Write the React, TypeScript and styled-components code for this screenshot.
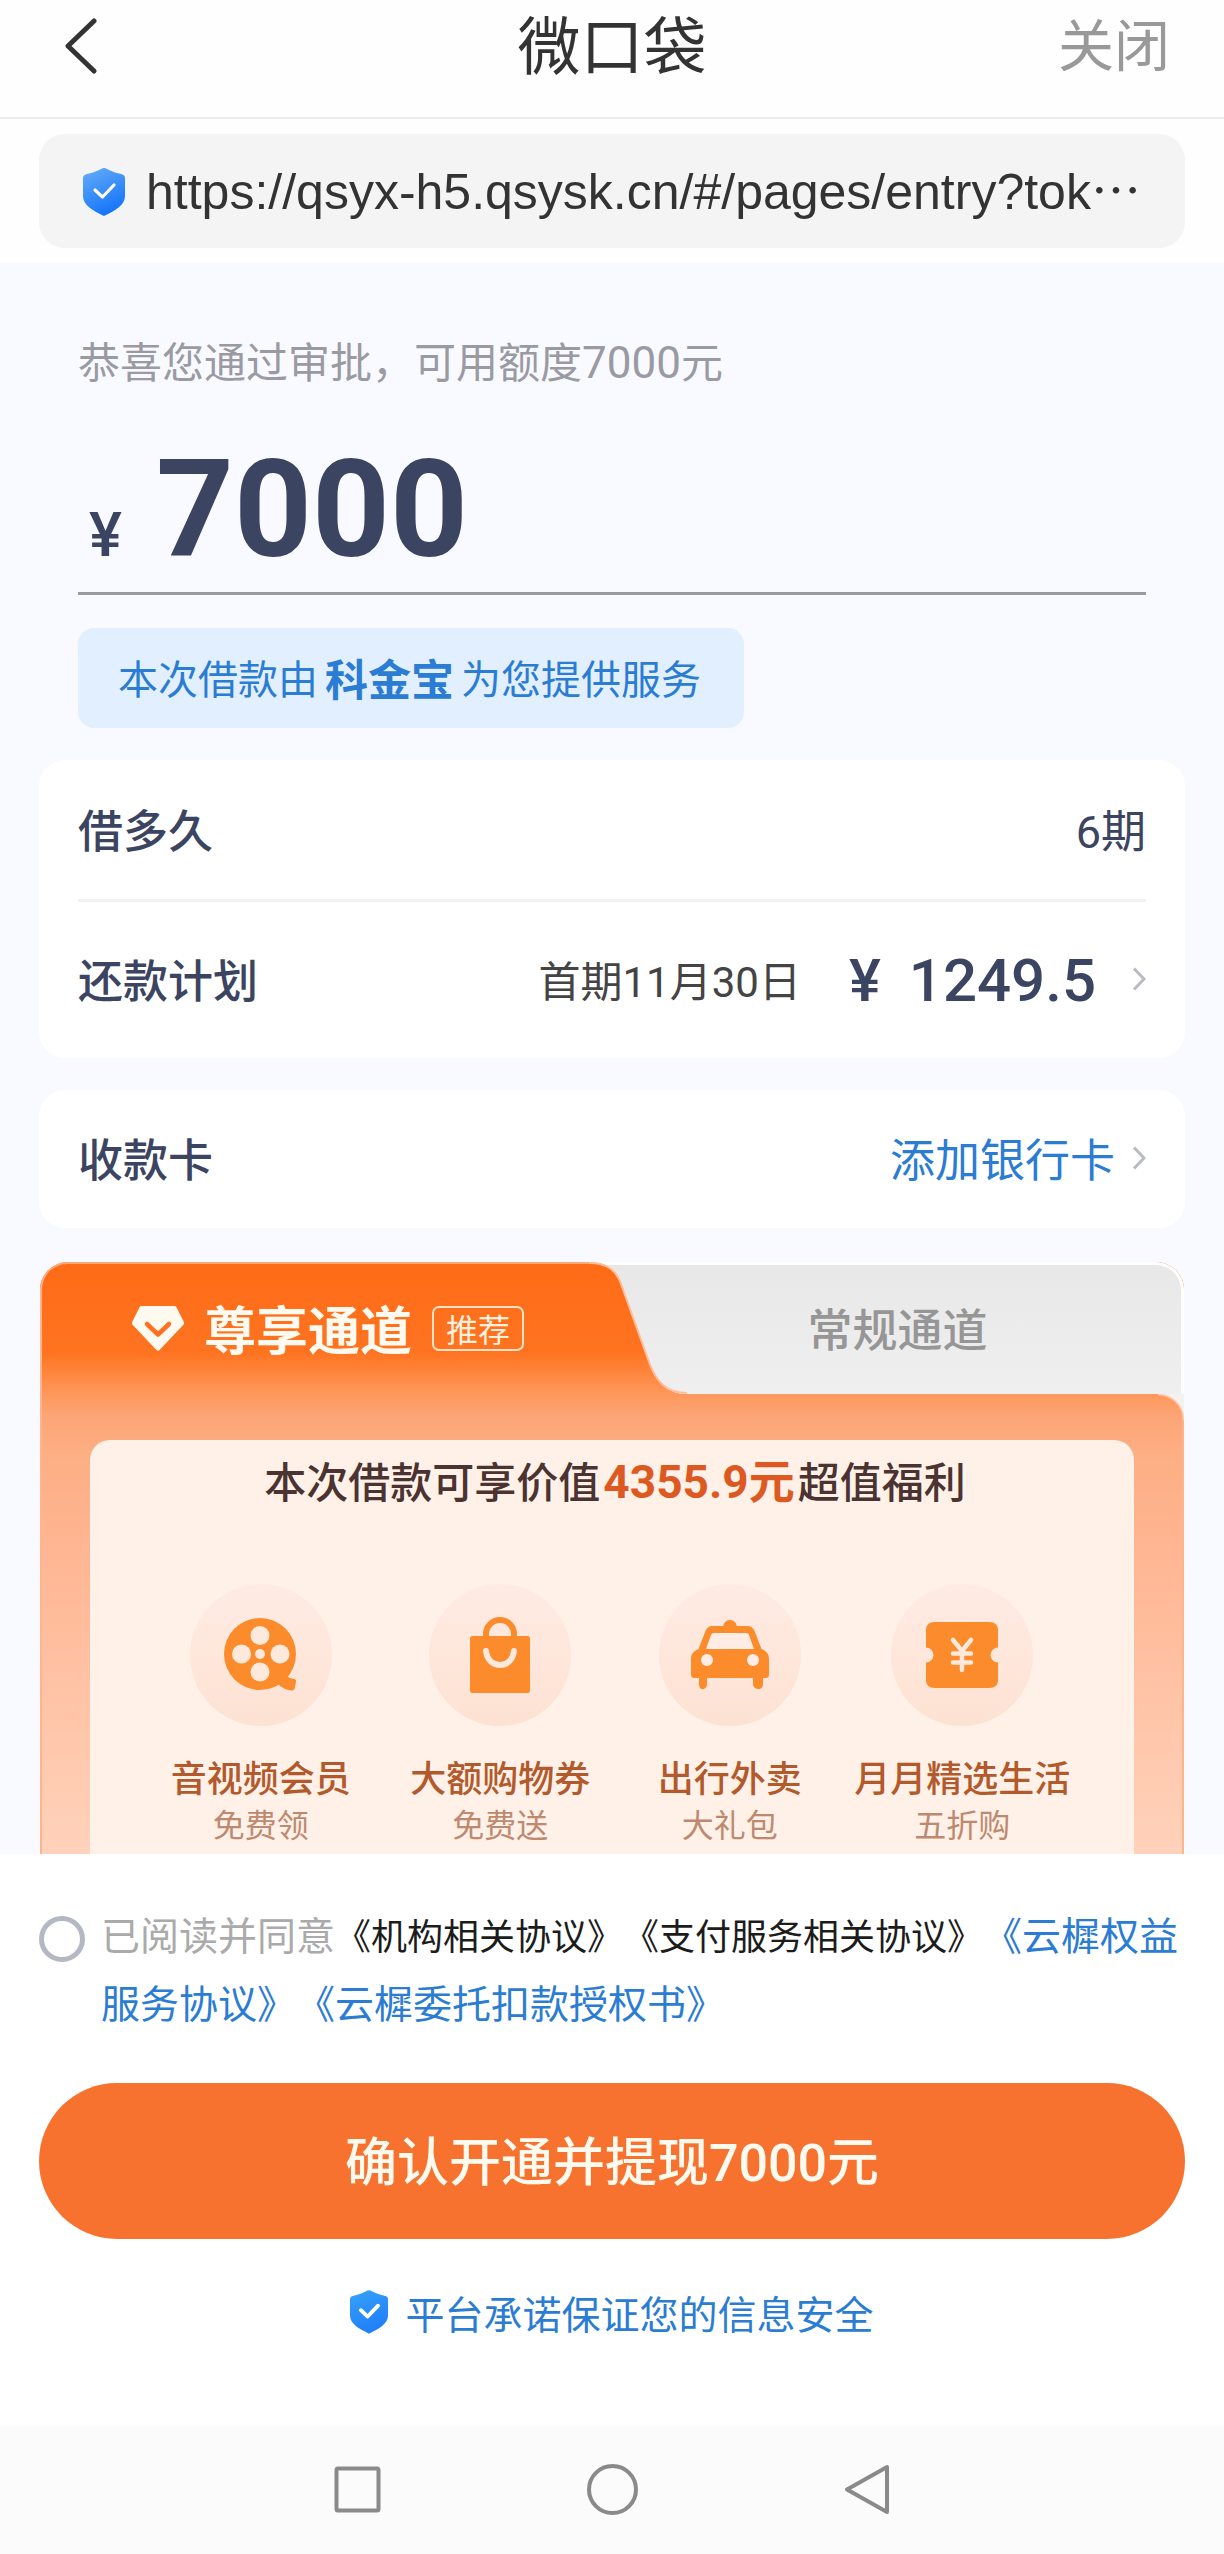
import React, { useState } from 'react';
import styled, { createGlobalStyle } from 'styled-components';

const C = {
  ink: '#3b4460',
  muted: '#9a9aa3',
  link: '#2b7cd3',
  page: '#f9faff',
  orange: '#f8722f',
  icon: '#fb8b2b',
};

const GlobalStyle = createGlobalStyle`
  *, *::before, *::after { box-sizing: border-box; }
  body {
    margin: 0;
    background: #fefefe;
    font-family: "Noto Sans CJK SC", sans-serif;
    text-spacing-trim: space-all;
    color: ${C.ink};
  }
  button { font: inherit; color: inherit; background: none; border: 0; padding: 0; cursor: pointer; }
  a { text-decoration: none; }
  svg { display: block; flex: none; }
`;

const Screen = styled.div`
  display: flex;
  flex-direction: column;
  min-height: 100vh;
`;

const Num = styled.span<{ $size?: number }>`
  font-family: Roboto, sans-serif;
  line-height: 1;
  ${(p) => (p.$size ? `font-size: ${p.$size}px;` : '')}
`;

const TopBar = styled.header`
  display: grid;
  grid-template-columns: 1fr auto 1fr;
  align-items: center;
  padding: 0 54px 33px;
  border-bottom: 2px solid #ececec;
`;

const BackButton = styled.button`
  justify-self: start;
  margin: 8px 0 0 10px;
`;

const AppTitle = styled.h1`
  margin: 0;
  font-size: 63px;
  line-height: 84px;
  font-weight: 400;
  color: #333;
`;

const CloseButton = styled.button`
  justify-self: end;
  && {
    font-size: 56px;
    line-height: 84px;
    color: #999;
  }
`;

const AddressWrap = styled.div`
  padding: 15px 39px;
`;

const Address = styled.div`
  display: flex;
  align-items: center;
  gap: 21px;
  padding: 26px 44px 24px;
  border-radius: 26px;
  background: #f4f4f4;
`;

const AddressText = styled.span`
  font-family: "Liberation Sans", sans-serif;
  font-size: 50px;
  line-height: 64px;
  white-space: nowrap;
  color: #333;
`;

const Dots = styled.span`
  font-family: "Noto Sans CJK SC", sans-serif;
  line-height: 1;
`;

const Main = styled.main`
  display: flex;
  flex-direction: column;
  gap: 32px;
  padding: 67px 39px 0;
  background: ${C.page};
`;

const Quota = styled.section`
  display: flex;
  flex-direction: column;
  padding: 0 39px;
`;

const Congrats = styled.p`
  margin: 0;
  font-size: 42px;
  line-height: 60px;
  color: ${C.muted};
`;

const Amount = styled.div`
  display: flex;
  align-items: baseline;
  gap: 34px;
  padding: 40px 0 2px 11px;
  border-bottom: 3px solid ${C.muted};
  font-family: Roboto, sans-serif;
`;

const Currency = styled.span`
  font-size: 62px;
  font-weight: 500;
`;

const AmountValue = styled.strong`
  font-size: 136px;
  line-height: 160px;
  font-weight: 700;
`;

const Provider = styled.div`
  display: flex;
  align-self: flex-start;
  align-items: center;
  gap: 7px;
  margin-top: 33px;
  padding: 19px 43px 21px 40px;
  border-radius: 16px;
  background: #e2efff;
  font-size: 40px;
  line-height: 60px;
  color: ${C.link};
`;

const ProviderName = styled.strong`
  font-size: 43px;
  font-weight: 700;
`;

const Card = styled.section`
  padding: 0 39px;
  border-radius: 26px;
  background: #fff;
`;

const Row = styled.div<{ $pad: string; $divided?: boolean }>`
  display: flex;
  align-items: center;
  padding: ${(p) => p.$pad};
  border-bottom: ${(p) => (p.$divided ? '3px solid #f2f2f4' : '0')};
  font-size: 45px;
  line-height: 64px;
`;

const RowLabel = styled.span`
  flex: 1;
  font-weight: 500;
`;

const RowAction = styled.button<{ $gap: number; $link?: boolean }>`
  display: flex;
  align-items: center;
  gap: ${(p) => p.$gap}px;
  && { color: ${(p) => (p.$link ? C.link : C.ink)}; }
`;

const FirstDue = styled.span`
  margin-right: 12px;
  font-size: 42px;
  color: #444;
`;

const Installment = styled.span`
  display: flex;
  gap: 28px;
  padding-top: 4px;
  font-family: Roboto, sans-serif;
  font-size: 60px;
  font-weight: 500;
`;

const Promo = styled.section`
  position: relative;
  margin: 2px 1px 0;
  border-radius: 28px 28px 0 0;
  background: linear-gradient(
    180deg,
    #ff6b17 0,
    #ff7320 90px,
    #fe9659 130px,
    #fca577 154px,
    #fdae83 190px,
    #ffb591 280px,
    #ffd2bb 592px
  );
  box-shadow: inset 0 2px 0 #ffa877, inset 2px 0 0 #ffb48c, inset -2px 0 0 #ffb48c;
`;

const Tabs = styled.div`
  display: flex;
`;

const ActiveTab = styled.button`
  flex: 0 0 48%;
  display: flex;
  align-items: center;
  gap: 20px;
  && { padding-left: 92px; }
`;

const ActiveTabText = styled.span`
  font-size: 52px;
  line-height: 132px;
  font-weight: 700;
  color: #fffaf0;
`;

const Tag = styled.span`
  padding: 0 12px;
  border: 2px solid #ffe2c4;
  border-radius: 7px;
  font-size: 32px;
  line-height: 41px;
  font-weight: 400;
  color: #fff1dd;
`;

const IdleTab = styled.button`
  position: relative;
  flex: 1;
  && {
    padding-left: 22px;
    font-size: 45px;
    line-height: 132px;
    font-weight: 500;
    color: #969696;
  }
  &::before {
    content: '';
    position: absolute;
    inset: 0 0 0 97px;
    border: solid #fff;
    border-width: 3px 3px 0 0;
    border-radius: 0 28px 0 0;
    background: linear-gradient(#e8e8e8, #efefef);
  }
  &::after {
    content: '';
    position: absolute;
    top: 100%;
    right: 0;
    width: 26px;
    height: 26px;
    background: radial-gradient(circle at 0 100%, transparent 24px, #ffbd98 25px, #f4f2f1 27px);
  }
`;

const Slant = styled.svg`
  position: absolute;
  left: 0;
  top: 0;
`;

const IdleTabText = styled.span`
  position: relative;
`;

const Benefits = styled.div`
  margin: 46px 50px 0;
  padding: 10px 47px 8px 53px;
  border-radius: 20px 20px 0 0;
  background: #fff0e8;
`;

const BenefitsTitle = styled.h2`
  margin: 0;
  font-size: 42px;
  line-height: 60px;
  font-weight: 500;
  text-align: center;
  white-space: nowrap;
  color: #4a3330;
`;

const Worth = styled.strong`
  padding: 0 3px;
  font-size: 46px;
  line-height: 1;
  font-weight: 700;
  color: #dc5a22;
`;

const BenefitList = styled.ul`
  display: grid;
  grid-template-columns: 236fr 244fr 216fr 250fr;
  margin: 74px 0 0;
  padding: 0;
  list-style: none;
`;

const Benefit = styled.li`
  display: flex;
  flex-direction: column;
  align-items: center;
  white-space: nowrap;
`;

const Disc = styled.span`
  display: grid;
  place-items: center;
  width: 142px;
  height: 142px;
  margin-bottom: 26px;
  border-radius: 50%;
  background: linear-gradient(#ffebe4, #fde2d2);
`;

const BenefitName = styled.span`
  font-size: 36px;
  line-height: 48px;
  font-weight: 500;
  color: #b25a2c;
`;

const BenefitNote = styled.span`
  font-size: 32px;
  line-height: 46px;
  font-weight: 400;
  color: #bd8a70;
`;

const Footer = styled.footer`
  display: flex;
  flex-direction: column;
  padding: 46px 39px 85px;
  background: #fff;
`;

const Agreement = styled.div`
  display: flex;
  gap: 16px;
`;

const AgreeRadio = styled.input`
  appearance: none;
  flex: none;
  width: 46px;
  height: 46px;
  margin: 16px 0 0;
  border: 5px solid #b3b8c2;
  border-radius: 50%;
  &:checked { background: ${C.orange}; }
`;

const AgreementText = styled.p`
  margin: 0;
  font-size: 39px;
  line-height: 67px;
`;

const AgreeLabel = styled.label`
  color: #aaa;
`;

const PlainDoc = styled.a`
  font-size: 36px;
  color: #1c1c1c;
`;

const LinkDoc = styled.a`
  color: ${C.link};
`;

const Confirm = styled.button`
  && {
    margin-top: 48px;
    padding: 38px 0 42px;
    border-radius: 78px;
    background: ${C.orange};
    font-size: 52px;
    line-height: 76px;
    font-weight: 500;
    color: #fffaf0;
  }
`;

const Promise = styled.p`
  display: flex;
  align-items: center;
  justify-content: center;
  gap: 17px;
  margin: 44px 0 0;
  font-size: 39px;
  line-height: 58px;
  color: ${C.link};
`;

const SystemNav = styled.nav`
  display: flex;
  flex: 1;
  align-items: flex-start;
  justify-content: center;
  gap: 204px;
  padding: 38px 0 36px;
  background: #fbfbfb;
`;

const Shield = ({ width, from, to }: { width: number; from: string; to: string }) => (
  <svg width={width} height={Math.round(width * 1.15)} viewBox="0 0 42 48">
    <defs>
      <linearGradient id={`shield${width}`} x1="0.2" y1="0" x2="0.6" y2="1">
        <stop offset="0" stopColor={from} />
        <stop offset="1" stopColor={to} />
      </linearGradient>
    </defs>
    <path
      d="M21 0c2 0 3 1 5 2 4 2 8 3 12 4 3 .7 4 2 4 4v18c0 9-10 15-21 20C10 43 0 37 0 28V10c0-2 1-3.300 4-4 4-1 8-2 12-4 2-1 3-2 5-2z"
      fill={`url(#shield${width})`}
    />
    <path d="M12 22l7.500 7L31 17" fill="none" stroke="#fff" strokeWidth={width > 40 ? 3.2 : 4.2} strokeLinecap="round" strokeLinejoin="round" />
  </svg>
);

const Chevron = () => (
  <svg width="14" height="24" viewBox="0 0 14 24" fill="none" stroke="#b9bbc2" strokeWidth="3">
    <path d="M2 1.500L12 12 2 22.500" />
  </svg>
);

const Diamond = () => (
  <svg width="52" height="45" viewBox="0 0 52 45">
    <path d="M10 0h32c1.200 0 2 .500 2.600 1.400l7 14c.7 1.400.5 2.600-.4 3.700L27.500 44c-.9 1-2.100 1-3 0L.8 19.100C-.1 18-.3 16.800.4 15.400l7-14C8 .500 8.800 0 10 0z" fill="#fffaf0" />
    <path d="M15 18l11 10.500L37 18" fill="none" stroke="#ff7020" strokeWidth="4.500" strokeLinecap="round" strokeLinejoin="round" />
  </svg>
);

const FilmIcon = () => (
  <svg width="74" height="76" viewBox="0 0 74 76">
    <path d="M52 64l8-8c2 2.500 4 4 6 5l4 1c1.800.3 2.300 1.200 2 2.700l-1.200 6c-.4 2-1.500 3-3.500 2.700C61 72.500 55 70 52 64z" fill={C.icon} />
    <circle cx="36" cy="37" r="36" fill={C.icon} />
    <g fill="#ffe8dc">
      <circle cx="36" cy="18.500" r="9.500" />
      <circle cx="17.500" cy="37" r="9.500" />
      <circle cx="56" cy="37" r="9.500" />
      <circle cx="36" cy="55" r="9.500" />
      <circle cx="36" cy="37" r="5" />
    </g>
  </svg>
);

const BagIcon = () => (
  <svg width="60" height="76" viewBox="0 0 60 76">
    <path d="M16 22v-5a14 14 0 0 1 28 0v5" fill="none" stroke={C.icon} strokeWidth="6" />
    <rect y="19" width="60" height="57" rx="2.500" fill={C.icon} />
    <path d="M16 34c1 9 7 14 14 14s13-5 14-14" fill="none" stroke="#ffe8dc" strokeWidth="6" strokeLinecap="round" />
  </svg>
);

const TaxiIcon = () => (
  <svg width="78" height="70" viewBox="0 0 78 70">
    <path d="M32 8c0-5 3-8 7-8s7 3 7 8z" fill={C.icon} />
    <path d="M22 6h34c4 0 6 1.500 7.500 5l7 18c5 2 7.500 5 7.500 10v15c0 3-1 4-4 4h-2v6c0 3-2 5-4.500 5S62 67 62 64v-6H16v6c0 3-2 5-4.500 5S8 67 8 64v-6H4c-3 0-4-1-4-4V39c0-5 2.500-8 7.500-10l7-18C16 7.500 18 6 22 6z" fill={C.icon} />
    <path d="M23 13h32c1.500 0 2.500.7 3 2l5 14H15l5-14c.5-1.300 1.500-2 3-2z" fill="#ffece4" />
    <circle cx="16" cy="40" r="6" fill="#ffece4" />
    <circle cx="62" cy="40" r="6" fill="#ffece4" />
  </svg>
);

const CouponIcon = () => (
  <svg width="72" height="66" viewBox="0 0 72 66">
    <path d="M9 0h54c6 0 9 3 9 8v17.500a7.500 7.500 0 0 0 0 15V58c0 5-3 8-9 8H9c-6 0-9-3-9-8V40.500a7.500 7.500 0 0 0 0-15V8c0-5 3-8 9-8z" fill={C.icon} />
    <path d="M27 18l9 11 9-11M27 31.500h18M27 40.500h18M36 30v18" fill="none" stroke="#ffe8dc" strokeWidth="4.500" strokeLinecap="round" strokeLinejoin="round" />
  </svg>
);

const benefits = [
  { name: '音视频会员', note: '免费领', icon: <FilmIcon /> },
  { name: '大额购物券', note: '免费送', icon: <BagIcon /> },
  { name: '出行外卖', note: '大礼包', icon: <TaxiIcon /> },
  { name: '月月精选生活', note: '五折购', icon: <CouponIcon /> },
];

export default function App() {
  const [agreed, setAgreed] = useState(false);

  return (
    <Screen lang="zh-CN">
      <GlobalStyle />
      <TopBar>
        <BackButton type="button" aria-label="返回">
          <svg width="34" height="56" viewBox="0 0 34 56" fill="none" stroke="#333" strokeWidth="5" strokeLinecap="round" strokeLinejoin="round">
            <path d="M30 3L4 28l26 25" />
          </svg>
        </BackButton>
        <AppTitle>微口袋</AppTitle>
        <CloseButton type="button">关闭</CloseButton>
      </TopBar>

      <AddressWrap>
        <Address>
          <Shield width={42} from="#62a9f8" to="#1173fb" />
          <AddressText>
            https://qsyx-h5.qsysk.cn/#/pages/entry?tok<Dots>…</Dots>
          </AddressText>
        </Address>
      </AddressWrap>

      <Main>
        <Quota>
          <Congrats>
            恭喜您通过审批，可用额度<Num $size={44}>7000</Num>元
          </Congrats>
          <Amount>
            <Currency>¥</Currency>
            <AmountValue>7000</AmountValue>
          </Amount>
          <Provider>
            <span>本次借款由</span>
            <ProviderName>科金宝</ProviderName>
            <span>为您提供服务</span>
          </Provider>
        </Quota>

        <Card>
          <Row $pad="37px 0 38px" $divided>
            <RowLabel>借多久</RowLabel>
            <span><Num>6</Num>期</span>
          </Row>
          <Row $pad="43px 0 45px">
            <RowLabel>还款计划</RowLabel>
            <RowAction type="button" $gap={36}>
              <FirstDue>
                首期<Num>11</Num>月<Num>30</Num>日
              </FirstDue>
              <Installment>
                <span>¥</span>
                <span>1249.5</span>
              </Installment>
              <Chevron />
            </RowAction>
          </Row>
        </Card>

        <Card>
          <Row $pad="36px 0 38px">
            <RowLabel>收款卡</RowLabel>
            <RowAction type="button" $gap={17} $link>
              <span>添加银行卡</span>
              <Chevron />
            </RowAction>
          </Row>
        </Card>

        <Promo>
          <Tabs role="tablist">
            <ActiveTab type="button" role="tab" aria-selected="true">
              <Diamond />
              <ActiveTabText>尊享通道</ActiveTabText>
              <Tag>推荐</Tag>
            </ActiveTab>
            <IdleTab type="button" role="tab" aria-selected="false">
              <Slant width="98" height="132" viewBox="0 0 98 132">
                <defs>
                  <linearGradient id="idle" x1="0" y1="0" x2="0" y2="1">
                    <stop offset="0" stopColor="#e8e8e8" />
                    <stop offset="1" stopColor="#efefef" />
                  </linearGradient>
                </defs>
                <path d="M0 0C18 0 27 8 32 22L60 100C67 120 78 132 98 132V0Z" fill="#fff" />
                <path d="M14 3C24 6 29 13 32 22L60 100C67 120 78 132 98 132V3Z" fill="url(#idle)" />
                <path d="M0 1C18 1 27 8 32 22L60 100C67 120 78 131 98 131" fill="none" stroke="#ffbd98" strokeWidth="2" />
              </Slant>
              <IdleTabText>常规通道</IdleTabText>
            </IdleTab>
          </Tabs>
          <Benefits>
            <BenefitsTitle>
              本次借款可享价值
              <Worth>
                <Num>4355.9</Num>元
              </Worth>
              超值福利
            </BenefitsTitle>
            <BenefitList>
              {benefits.map((b) => (
                <Benefit key={b.name}>
                  <Disc>{b.icon}</Disc>
                  <BenefitName>{b.name}</BenefitName>
                  <BenefitNote>{b.note}</BenefitNote>
                </Benefit>
              ))}
            </BenefitList>
          </Benefits>
        </Promo>
      </Main>

      <Footer>
        <Agreement>
          <AgreeRadio
            type="radio"
            id="agree"
            checked={agreed}
            onChange={() => setAgreed(true)}
          />
          <AgreementText>
            <AgreeLabel htmlFor="agree">已阅读并同意</AgreeLabel>
            <PlainDoc href="#org">《机构相关协议》</PlainDoc>
            <PlainDoc href="#pay">《支付服务相关协议》</PlainDoc>
            <LinkDoc href="#rights">《云樨权益服务协议》</LinkDoc>
            <LinkDoc href="#debit">《云樨委托扣款授权书》</LinkDoc>
          </AgreementText>
        </Agreement>
        <Confirm type="button">
          确认开通并提现<Num>7000</Num>元
        </Confirm>
        <Promise>
          <Shield width={38} from="#35a0f8" to="#1f7dfb" />
          平台承诺保证您的信息安全
        </Promise>
      </Footer>

      <SystemNav aria-label="系统导航">
        <button type="button" aria-label="最近任务">
          <svg width="51" height="51" viewBox="0 0 51 51" fill="none" stroke="#8a8a8a" strokeWidth="4">
            <rect x="4.500" y="4.500" width="42" height="42" rx="1.500" />
          </svg>
        </button>
        <button type="button" aria-label="主页">
          <svg width="51" height="51" viewBox="0 0 51 51" fill="none" stroke="#8a8a8a" strokeWidth="4">
            <circle cx="25.500" cy="25.500" r="23.500" />
          </svg>
        </button>
        <button type="button" aria-label="返回上一页">
          <svg width="51" height="51" viewBox="0 0 51 51" fill="none" stroke="#8a8a8a" strokeWidth="4" strokeLinejoin="round">
            <path d="M45 3v45L5 25.500z" />
          </svg>
        </button>
      </SystemNav>
    </Screen>
  );
}
